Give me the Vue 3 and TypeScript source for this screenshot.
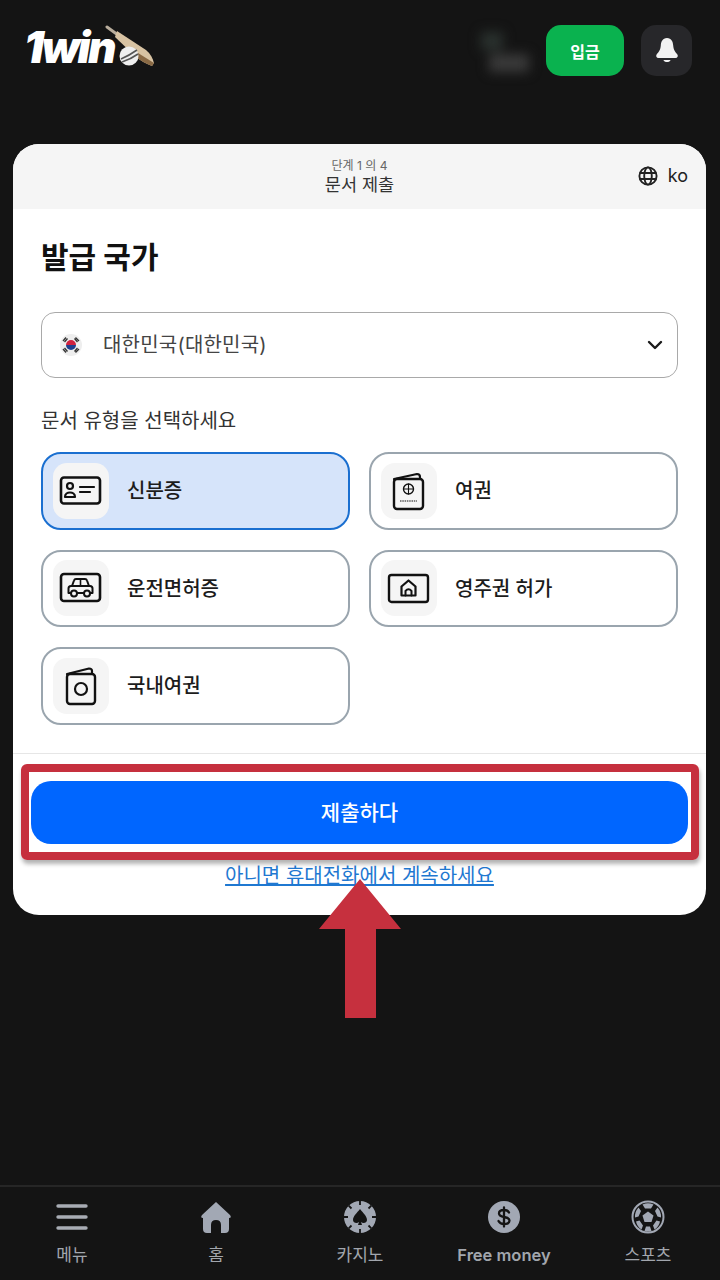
<template>
  <div class="page">
    <header class="topbar">
      <div class="logo">
        <span class="logo-text">1win</span>
        <svg class="logo-bat" width="54" height="44" viewBox="0 0 54 44">
          <path d="M3 2 L14 10" stroke="#b9ad9c" stroke-width="3" stroke-linecap="round" />
          <path d="M13 6 L42 25 Q48 30 50 38 L48 41 Q38 37 32 32 L11 12 Z" fill="#d8c3a3" />
          <path d="M34 28 L50 38 L48 41 Q38 37 32 32 Z" fill="#8a6a45" />
          <circle cx="25" cy="31" r="9.5" fill="#eeeeee" />
          <path d="M17 34 Q26 30 33 25 M18 37 Q27 34 34 29" stroke="#555" stroke-width="1.6" fill="none" />
        </svg>
      </div>
      <div class="top-right">
        <div class="balance">
          <span class="blur-a"></span>
          <span class="blur-b"></span>
        </div>
        <button class="deposit">입금</button>
        <button class="bell">
          <svg width="24" height="28" viewBox="0 0 24 28">
            <path d="M12 1 C7.5 1 6 5 5.8 8.5 C5.5 13 3.6 15 1.6 17.5 C.6 19 1.4 21 3.5 21 H20.5 C22.6 21 23.4 19 22.4 17.5 C20.4 15 18.5 13 18.2 8.5 C18 5 16.5 1 12 1 Z" fill="#f2f2f2" />
            <path d="M8.5 23 H15.5 C15 25.8 9 25.8 8.5 23 Z" fill="#f2f2f2" />
          </svg>
        </button>
      </div>
    </header>

    <main class="main">
      <section class="card">
        <div class="card-head">
          <div class="step">단계 1 의 4</div>
          <div class="head-title">문서 제출</div>
          <div class="lang">
            <svg width="20" height="20" viewBox="0 0 20 20" fill="none" stroke="#222" stroke-width="1.9">
              <circle cx="10" cy="10" r="8.6" />
              <ellipse cx="10" cy="10" rx="3.8" ry="8.6" />
              <path d="M1.6 7 H18.4 M1.6 13 H18.4" />
            </svg>
            <span>ko</span>
          </div>
        </div>

        <div class="card-body">
          <h1 class="title">발급 국가</h1>
          <div class="select">
            <svg class="flag" width="22" height="22" viewBox="0 0 22 22">
              <circle cx="11" cy="11" r="11" fill="#eeeeee" />
              <path d="M6 11 A5 5 0 0 1 16 11 Z" fill="#d0213f" />
              <path d="M6 11 A5 5 0 0 0 16 11 Z" fill="#1f3f8f" />
              <path d="M3 7 L6 3.5 M4.5 8 L7.5 4.5 M15.5 3.5 L19 7 M14.5 4.5 L17.5 8 M3 15 L6 18.5 M4.5 14 L7.5 17.5 M15.5 18.5 L19 15 M14.5 17.5 L17.5 14" stroke="#333" stroke-width="1.3" />
            </svg>
            <span class="select-text">대한민국(대한민국)</span>
            <svg class="chevron" width="16" height="10" viewBox="0 0 16 10" fill="none" stroke="#1b1b1b" stroke-width="2.4" stroke-linecap="round" stroke-linejoin="round">
              <path d="M2 2 L8 8 L14 2" />
            </svg>
          </div>
          <div class="doc-label">문서 유형을 선택하세요</div>
          <div class="options">
            <div v-for="opt in options" :key="opt.key" class="option" :class="{ active: opt.key === selected }">
              <div class="option-icon">
                <svg width="44" height="44" viewBox="0 0 44 44" fill="none" stroke="#111" stroke-width="2.2" stroke-linecap="round" stroke-linejoin="round">
                  <template v-if="opt.key === 'id'">
                    <rect x="2" y="8.500" width="39" height="26" rx="3" stroke-width="2.6" />
                    <circle cx="11" cy="17" r="3" />
                    <path d="M6 28 C6 22 16 22 16 28 Z" />
                    <path d="M21 18 H35 M21 23 H31" />
                  </template>
                  <template v-else-if="opt.key === 'passport'">
                    <path d="M7 10 L30 5 Q33 5 33 8 V10" />
                    <rect x="7" y="10" width="29" height="30" rx="3" stroke-width="2.4" />
                    <circle cx="21.500" cy="20" r="5" stroke-width="1.4" />
                    <path d="M16.500 20 H26.500 M21.500 15 V25" stroke-width="1.1" />
                    <path d="M13 32 H30" stroke-width="1.2" stroke-dasharray="1.500 .8" stroke-linecap="butt" />
                  </template>
                  <template v-else-if="opt.key === 'license'">
                    <rect x="2" y="8" width="39" height="27" rx="3" stroke-width="2.6" />
                    <path d="M13 20 L15 14.500 Q15.500 13 17 13 H26 Q27.500 13 28 14.500 L30 20" stroke-width="2" />
                    <path d="M21.500 13 V20" stroke-width="1.6" />
                    <path d="M12 27 H9.500 V22.500 Q9.500 20 12 20 H31 Q33.500 20 33.500 22.500 V27 H31 M18 27 H25" stroke-width="2" />
                    <circle cx="15" cy="27.500" r="3" stroke-width="2" />
                    <circle cx="28" cy="27.500" r="3" stroke-width="2" />
                  </template>
                  <template v-else-if="opt.key === 'residence'">
                    <rect x="2" y="9" width="39" height="27" rx="2.500" stroke-width="2.4" />
                    <path d="M14.500 20.500 L21.500 14.500 L28.500 20.500 V29.500 H14.500 Z" stroke-width="2.2" />
                    <path d="M18.500 29.500 V25 Q21.500 21.500 24.500 25 V29.500" stroke-width="2" />
                  </template>
                  <template v-else>
                    <path d="M8 10 L30 4.500 Q33 4.500 33 7 V10" />
                    <rect x="8" y="10" width="28" height="30" rx="3" stroke-width="2.4" />
                    <circle cx="22" cy="25" r="6" stroke-width="2.2" />
                  </template>
                </svg>
              </div>
              <span class="option-name">{{ opt.label }}</span>
            </div>
          </div>
        </div>

        <div class="card-foot">
          <button class="submit">제출하다</button>
          <a class="alt-link" href="#">아니면 휴대전화에서 계속하세요</a>
          <div class="red-frame"></div>
        </div>
      </section>

      <svg class="red-arrow" width="82" height="140" viewBox="0 0 82 140">
        <path d="M41 0 L82 50 H57 V139 H26 V50 H0 Z" fill="#c6303e" />
      </svg>
    </main>

    <nav class="bottom-nav">
      <div v-for="item in navItems" :key="item.key" class="nav-item">
        <svg class="nav-icon" width="34" height="34" viewBox="0 0 34 34" fill="#a2a8b4">
          <template v-if="item.key === 'menu'">
            <path d="M3 6 H31 M3 17 H31 M3 28 H31" stroke="#a8acb4" stroke-width="3.4" stroke-linecap="round" />
          </template>
          <template v-else-if="item.key === 'home'">
            <path d="M17 2 L31 15 Q33 18 30 18 H30 V29 Q30 33 26 33 H22 V25 Q22 20 17 20 Q12 20 12 25 V33 H8 Q4 33 4 29 V18 Q1 18 3 15 Z" />
          </template>
          <template v-else-if="item.key === 'casino'">
            <circle cx="17" cy="17" r="16" />
            <path d="M17 9 C20 13 24 16 24 20 C24 23 20 24 18 22 L19 25 H15 L16 22 C14 24 10 23 10 20 C10 16 14 13 17 9 Z" fill="#141414" />
            <path d="M17 1 V5 M17 29 V33 M1 17 H5 M29 17 H33 M5.700 5.700 L8.500 8.500 M25.500 25.500 L28.300 28.300 M5.700 28.300 L8.500 25.500 M25.500 8.500 L28.300 5.700" stroke="#141414" stroke-width="1.800" />
          </template>
          <template v-else-if="item.key === 'money'">
            <circle cx="17" cy="17" r="16" />
            <path d="M22 12.500 C21 10.500 19 10 17 10 C14 10 12 11.500 12 13.500 C12 18.500 22.500 15.500 22.500 20.500 C22.500 22.800 20 24 17 24 C14.500 24 12.500 23 11.500 21 M17 7.500 V26.500" fill="none" stroke="#141414" stroke-width="2.300" stroke-linecap="round" />
          </template>
          <template v-else>
            <circle cx="17" cy="17" r="15.500" fill="none" stroke="#a2a8b4" stroke-width="2" />
            <path d="M17 11.500 L22.500 15.500 L20.500 22 H13.500 L11.500 15.500 Z" />
            <path d="M11.500 4.500 Q17 2 22.500 4.500 L20 8.500 H14 Z M26.500 7.500 Q30.500 12 30 17.500 L26.500 16.500 L24 11 Z M7.500 7.500 Q3.500 12 4 17.500 L7.500 16.500 L10 11 Z M10.500 29.500 Q6 26.500 5 21.500 L8.500 20.500 L12 25.500 Z M23.500 29.500 Q28 26.500 29 21.500 L25.500 20.500 L22 25.500 Z M13.500 31 L15 26.500 H19 L20.500 31 Q17 32 13.500 31 Z" />
          </template>
        </svg>
        <span class="nav-label" :class="{ latin: item.key === 'money' }">{{ item.label }}</span>
      </div>
    </nav>
  </div>
</template>

<script setup lang="ts">
const selected = "id";

const options = [
  { key: "id", label: "신분증" },
  { key: "passport", label: "여권" },
  { key: "license", label: "운전면허증" },
  { key: "residence", label: "영주권 허가" },
  { key: "domestic", label: "국내여권" },
];

const navItems = [
  { key: "menu", label: "메뉴" },
  { key: "home", label: "홈" },
  { key: "casino", label: "카지노" },
  { key: "money", label: "Free money" },
  { key: "sports", label: "스포츠" },
];
</script>

<style>
body {
  background: #141414;
}
</style>

<style scoped>
.page {
  width: 720px;
  height: 1280px;
  background: #141414;
  display: flex;
  flex-direction: column;
  font-family: "Inter", "Noto Sans CJK KR", sans-serif;
  overflow: hidden;
}

.topbar {
  height: 144px;
  flex: none;
  display: flex;
  justify-content: space-between;
  align-items: flex-start;
  padding: 25px 28px 0 24px;
  box-sizing: border-box;
}
.logo {
  display: flex;
  align-items: flex-start;
}
.logo-text {
  font-family: "Inter", sans-serif;
  font-weight: 900;
  font-style: italic;
  font-size: 44px;
  line-height: 44px;
  letter-spacing: -2.5px;
  color: #fff;
}
.logo-bat {
  margin-left: -10px;
  flex: none;
}
.top-right {
  display: flex;
  align-items: center;
}
.balance {
  width: 56px;
  height: 50px;
  margin-right: 11px;
  position: relative;
  filter: blur(6px);
}
.blur-a {
  position: absolute;
  left: 2px;
  top: 6px;
  width: 22px;
  height: 18px;
  background: #2a312e;
}
.blur-b {
  position: absolute;
  left: 10px;
  top: 28px;
  width: 40px;
  height: 18px;
  background: #3a3a3a;
}
.deposit {
  width: 78px;
  height: 51px;
  border: none;
  border-radius: 15px;
  background: #0ab24f;
  color: #fff;
  font-family: inherit;
  font-size: 16px;
  font-weight: 700;
  margin-right: 17px;
}
.bell {
  width: 51px;
  height: 51px;
  border: none;
  border-radius: 15px;
  background: #27272a;
  display: flex;
  align-items: center;
  justify-content: center;
  padding: 0;
}

.main {
  position: relative;
  flex: 1;
  padding: 0 14px 0 13px;
}
.card {
  background: #fff;
  border-radius: 26px;
  overflow: hidden;
  height: 771px;
}
.card-head {
  position: relative;
  height: 65px;
  background: #f5f5f5;
  text-align: center;
  padding-top: 15px;
  box-sizing: border-box;
}
.step {
  font-size: 12px;
  line-height: 14px;
  color: #666;
}
.head-title {
  margin-top: 1px;
  font-size: 17.5px;
  line-height: 22px;
  color: #333;
}
.lang {
  position: absolute;
  right: 18px;
  top: 22px;
  display: flex;
  align-items: center;
  gap: 10px;
  font-size: 18px;
  line-height: 20px;
  color: #222;
}

.card-body {
  padding: 30px 28px 28.5px;
  border-bottom: 1px solid #e6e6e6;
}
.title {
  margin: 0;
  font-size: 30px;
  line-height: 36px;
  font-weight: 700;
  color: #111;
}
.select {
  margin-top: 37px;
  height: 66px;
  box-sizing: border-box;
  border: 1px solid #a9a9a9;
  border-radius: 14px;
  display: flex;
  align-items: center;
  padding: 0 14px 0 18px;
}
.flag {
  flex: none;
}
.select-text {
  margin-left: 21px;
  margin-bottom: 3px;
  flex: 1;
  font-size: 20px;
  letter-spacing: 0.2px;
  color: #444;
}
.doc-label {
  margin-top: 31px;
  font-size: 20px;
  line-height: 24px;
  color: #333;
}
.options {
  margin-top: 19px;
  display: grid;
  grid-template-columns: 309px 309px;
  column-gap: 19px;
  grid-auto-rows: 77.5px;
  row-gap: 20px;
}
.option {
  box-sizing: border-box;
  border: 2px solid #9aa5ae;
  border-radius: 20px;
  display: flex;
  align-items: center;
  padding-left: 10px;
  background: #fff;
}
.option.active {
  background: #d6e4fa;
  border-color: #1a6fd0;
}
.option-icon {
  width: 56px;
  height: 56px;
  flex: none;
  border-radius: 14px;
  background: #f5f5f5;
  display: flex;
  align-items: center;
  justify-content: center;
}
.option-name {
  margin-left: 18px;
  margin-bottom: 2px;
  font-size: 20px;
  font-weight: 500;
  color: #1c1c1c;
}

.card-foot {
  position: relative;
  padding: 27px 18px 0;
  text-align: center;
}
.submit {
  display: block;
  width: 100%;
  height: 63px;
  padding: 0 0 4px;
  border: none;
  border-radius: 20px;
  background: #0066ff;
  color: #fff;
  font-family: inherit;
  font-size: 21px;
  font-weight: 500;
}
.alt-link {
  display: inline-block;
  margin-top: 21px;
  font-size: 20px;
  line-height: 22px;
  color: #1f78d1;
  text-decoration: underline;
}
.red-frame {
  position: absolute;
  left: 8px;
  top: 10px;
  width: 678px;
  height: 96px;
  box-sizing: border-box;
  border: 8px solid #c6303e;
  border-radius: 6px;
  box-shadow: 1px 4px 4px rgba(0, 0, 0, 0.3);
}
.red-arrow {
  position: absolute;
  left: 319px;
  top: 735px;
}

.bottom-nav {
  flex: none;
  height: 95px;
  border-top: 2px solid #262626;
  box-sizing: border-box;
  display: grid;
  grid-template-columns: repeat(5, 144px);
}
.nav-item {
  display: flex;
  flex-direction: column;
  align-items: center;
  padding-top: 13px;
}
.nav-icon {
  flex: none;
}
.nav-label {
  margin-top: 10px;
  font-size: 17px;
  line-height: 22px;
  color: #a2a6ad;
}
.nav-label.latin {
  font-size: 16.500px;
  font-weight: 600;
}
</style>
